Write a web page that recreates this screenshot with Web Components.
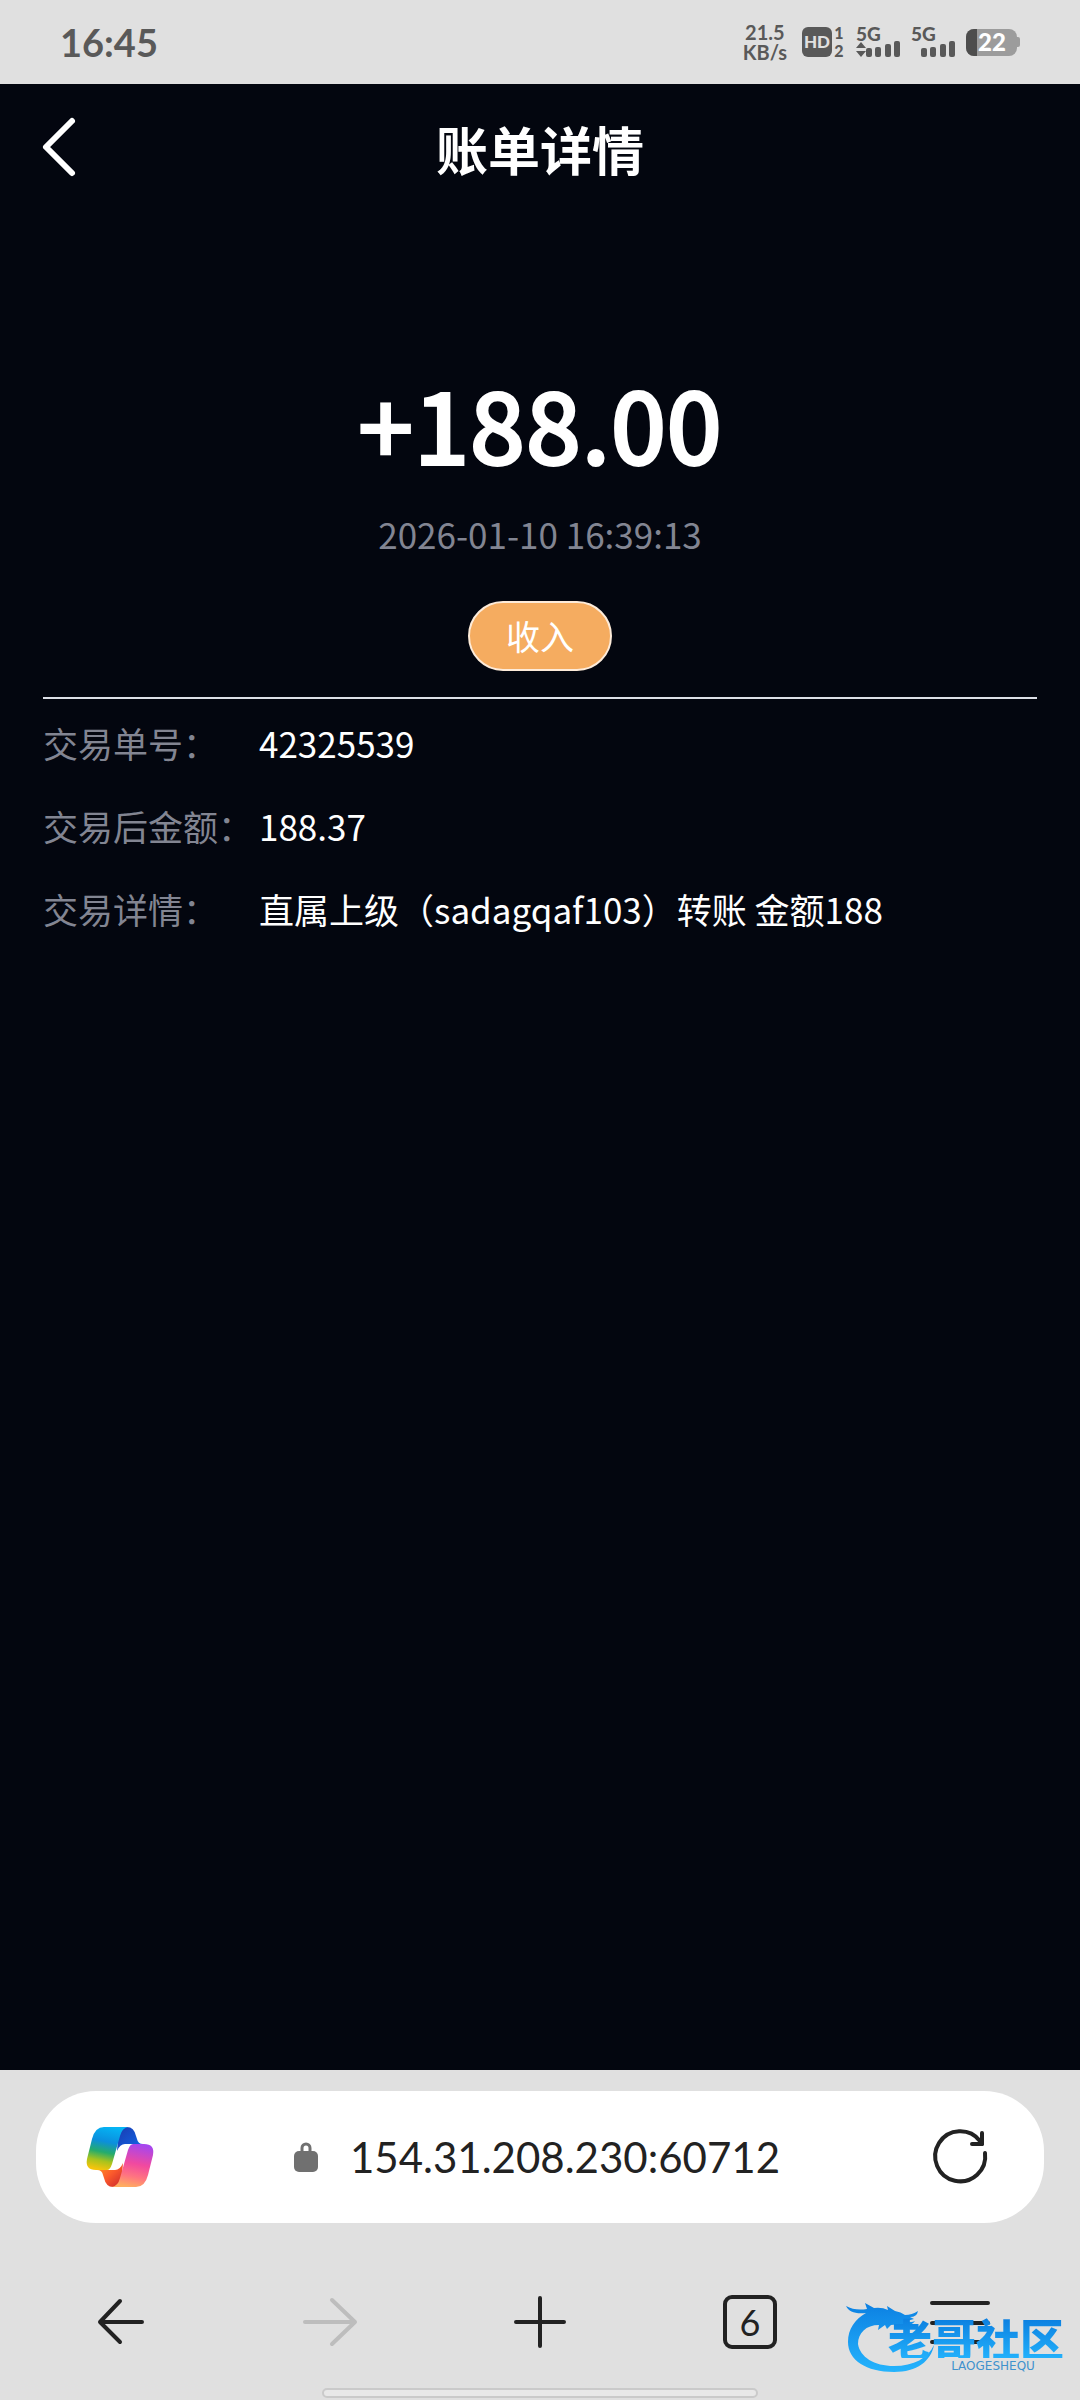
<!DOCTYPE html>
<html lang="zh-CN">
<head>
<meta charset="utf-8">
<meta name="viewport" content="width=device-width">
<title>账单详情</title>
<style>
html, body { margin: 0; background: #03060f; }
body { font-family: "Noto Sans CJK SC", "Noto Sans", sans-serif; font-size: 35px; color: #fff; }
</style>
</head>
<body>
<bill-screen>
  <status-bar slot="top"></status-bar>
  <page-header slot="top">账单详情</page-header>
  <bill-summary amount="+188.00" time="2026-01-10 16:39:13" kind="收入"></bill-summary>
  <bill-details>
    <bill-row label="交易单号：">42325539</bill-row>
    <bill-row label="交易后金额：">188.37</bill-row>
    <bill-row label="交易详情：">直属上级（sadagqaf103）转账 金额188</bill-row>
  </bill-details>
  <address-bar slot="bottom" url="154.31.208.230:60712"></address-bar>
  <browser-nav slot="bottom" tabs="6"></browser-nav>
  <site-watermark slot="bottom"></site-watermark>
</bill-screen>

<script>
const define = (name, render) => customElements.define(name, class extends HTMLElement {
  constructor() {
    super();
    this.attachShadow({ mode: 'open' });
  }
  connectedCallback() {
    this.shadowRoot.innerHTML = '<style>*{box-sizing:border-box}button{margin:0;padding:0;border:0;background:none;color:inherit;font:inherit}svg{display:block;overflow:visible}</style>' + render(this);
  }
});

define('bill-screen', () => `
<style>
:host { display: flex; flex-direction: column; min-height: 100vh; background: #03060f; }
main { flex: 1; padding: 0 43px; }
footer { position: relative; background: #e0e0e0; color: #222; padding: 21px 0 2px; }
</style>
<slot name="top"></slot>
<main><slot></slot></main>
<footer><slot name="bottom"></slot></footer>`);

define('status-bar', () => `
<style>
:host { display: flex; justify-content: space-between; align-items: center; height: 84px; padding: 0 60px; background: #e0e0e0; color: #595959; font-family: Lato, sans-serif; font-weight: 700; }
time { font-size: 38px; line-height: 44px; }
.icons { display: flex; align-items: center; gap: 11px; }
.speed { font-size: 20px; line-height: 20px; text-align: center; padding-right: 3px; }
.speed span { display: block; }
text { font-family: Lato, sans-serif; font-weight: 900; }
</style>
<time>16:45</time>
<div class="icons">
  <div class="speed"><span>21.5</span><span>KB/s</span></div>
  <svg width="44" height="32" viewBox="0 0 44 32" fill="#595959">
    <rect x="1" y="1" width="30" height="30" rx="6"/>
    <text x="16" y="22" font-size="17" text-anchor="middle" fill="#e0e0e0">HD</text>
    <text x="38" y="13" font-size="16" text-anchor="middle">1</text>
    <text x="38" y="31" font-size="16" text-anchor="middle">2</text>
  </svg>
  <svg width="44" height="32" viewBox="0 0 44 32" fill="#595959">
    <text x="0" y="15" font-size="19">5G</text>
    <path d="M5 16l5 6H0zM5 31l5-6H0z"/>
    <rect x="10" y="22" width="6" height="9" rx="2"/><rect x="19" y="21" width="6" height="10" rx="2"/><rect x="29" y="18" width="6" height="13" rx="2"/><rect x="38" y="15" width="6" height="16" rx="2"/>
  </svg>
  <svg width="44" height="32" viewBox="0 0 44 32" fill="#595959">
    <text x="0" y="15" font-size="19">5G</text>
    <rect x="10" y="22" width="6" height="9" rx="2"/><rect x="19" y="21" width="6" height="10" rx="2"/><rect x="29" y="18" width="6" height="13" rx="2"/><rect x="38" y="15" width="6" height="16" rx="2"/>
  </svg>
  <svg width="54" height="27" viewBox="0 0 54 27">
    <rect x="0" y="0" width="51" height="27" rx="8" fill="#9c9c9c"/>
    <path d="M51 8h1q2 0 2 2v6q0 2-2 2h-1z" fill="#9c9c9c"/>
    <path d="M11 0v27H8a8 8 0 0 1-8-8V8a8 8 0 0 1 8-8z" fill="#4d4d4d"/>
    <text x="26" y="22" font-size="24" text-anchor="middle" fill="#fff">22</text>
  </svg>
</div>`);

define('page-header', () => `
<style>
:host { display: grid; grid-template-columns: 1fr auto 1fr; align-items: center; height: 130px; padding: 0 43px; }
h1 { margin: 0; font-size: 52px; line-height: 76px; font-weight: 700; }
</style>
<button aria-label="返回"><svg width="32" height="62" viewBox="0 0 32 62" fill="none" stroke="#fff" stroke-width="6" stroke-linecap="round" stroke-linejoin="round"><path d="M29 3L3 29l26 26"/></svg></button>
<h1><slot></slot></h1>`);

define('bill-summary', el => `
<style>
:host { display: flex; flex-direction: column; align-items: center; padding: 128px 0 26px; border-bottom: 2px solid #dcdfe6; }
strong { font-size: 98px; line-height: 160px; font-weight: 500; -webkit-text-stroke: 2px currentColor; }
time { color: #828592; line-height: 52px; margin: 6px 0 41px; }
button { width: 144px; height: 70px; border: 2px solid #fdebd9; border-radius: 35px; background: #f5ac60; color: #fff; font-size: 34px; line-height: 66px; }
</style>
<strong>${el.getAttribute('amount')}</strong>
<time>${el.getAttribute('time')}</time>
<button>${el.getAttribute('kind')}</button>`);

define('bill-details', () => `
<style>:host { display: flex; flex-direction: column; gap: 31px; padding-top: 18px; }</style>
<slot></slot>`);

define('bill-row', el => `
<style>
:host { display: flex; line-height: 52px; }
.label { flex: 0 0 216px; color: #828592; white-space: nowrap; }
.value { flex: 1; }
</style>
<span class="label">${el.getAttribute('label')}</span>
<span class="value"><slot></slot></span>`);

define('address-bar', el => `
<style>
:host { display: flex; align-items: center; justify-content: space-between; height: 132px; margin: 0 36px; padding: 0 51px; border-radius: 60px; background: #fff; }
label { display: flex; align-items: center; gap: 32px; padding-right: 6px; }
input { field-sizing: content; border: 0; padding: 0; background: none; color: #222; font: 42px/56px Lato, sans-serif; outline: 0; }
</style>
<button aria-label="Copilot"><svg width="66" height="60" viewBox="0 0 66 60">
  <defs>
    <linearGradient id="a" x1=".6" y1="0" x2=".4" y2="1"><stop offset="0" stop-color="#05b4f4"/><stop offset=".35" stop-color="#0b8fdd"/><stop offset=".6" stop-color="#25ac6c"/><stop offset=".8" stop-color="#a8c31d"/><stop offset="1" stop-color="#f4c40c"/></linearGradient>
    <linearGradient id="b" x1=".6" y1="0" x2=".4" y2="1"><stop offset="0" stop-color="#a646ee"/><stop offset=".45" stop-color="#f1499f"/><stop offset=".75" stop-color="#ff7580"/><stop offset="1" stop-color="#ffad60"/></linearGradient>
    <linearGradient id="c" x1="0" y1="0" x2="1" y2="1"><stop offset="0" stop-color="#1a3bb0"/><stop offset="1" stop-color="#1169ea"/></linearGradient>
    <linearGradient id="d" x1="0" y1="0" x2="1" y2="1"><stop offset="0" stop-color="#ff9a20"/><stop offset=".5" stop-color="#fb5a2c"/><stop offset="1" stop-color="#c8232c"/></linearGradient>
  </defs>
  <path d="M32 0h8q7 0 9 9l1 3q1 5 6 5H38q-5 0-8 7z" fill="url(#c)"/>
  <path d="M34 60h-8q-7 0-9-9l-1-3q-1-5-6-5h18q5 0 8-7z" fill="url(#d)"/>
  <path d="M17 0h24q-6 1-8 9l-8 28q-2 6-5 6H9q-11 0-9-11L5 12Q8 0 17 0z" fill="url(#a)"/>
  <path d="M49 60H25q6-1 8-9l8-28q2-6 5-6h11q11 0 9 11l-5 20q-3 12-12 12z" fill="url(#b)"/>
</svg></button>
<label><svg width="24" height="30" viewBox="0 0 24 30"><rect y="9" width="24" height="21" rx="5" fill="#707070"/><path d="M8 11V6a4 4 0 0 1 8 0v5" fill="none" stroke="#707070" stroke-width="3"/></svg>
<input aria-label="网址" value="${el.getAttribute('url')}" readonly></label>
<button aria-label="刷新"><svg width="66" height="60" viewBox="0 0 66 60" fill="none" stroke="#222" stroke-width="4" stroke-linecap="round" stroke-linejoin="round"><path d="M58 26a25 25 0 1 1-5-12l2 3"/><path d="M55 6v11H45"/></svg></button>`);

define('browser-nav', el => `
<style>
:host { display: flex; flex-direction: column; align-items: center; gap: 28px; }
nav { display: grid; grid-template-columns: repeat(5, 1fr); width: 100%; padding: 60px 15px 0; }
button { display: flex; justify-content: center; align-items: center; height: 77px; }
.tabs span { width: 54px; height: 54px; border: 4px solid #222; border-radius: 9px; font: 36px/46px Lato, sans-serif; }
i { width: 436px; height: 10px; border: 2px solid #cacaca; border-radius: 5px; background: #e8e8e8; }
</style>
<nav>
  <button aria-label="后退"><svg width="60" height="56" viewBox="0 0 60 56" fill="none" stroke="#222" stroke-width="4" stroke-linecap="round" stroke-linejoin="round"><path d="M30 7L10 28l20 20M10 28h42"/></svg></button>
  <button aria-label="前进" disabled><svg width="60" height="56" viewBox="0 0 60 56" fill="none" stroke="#bdbdbd" stroke-width="4" stroke-linecap="round" stroke-linejoin="round"><path d="M32 6l23 22-23 22M55 28H5"/></svg></button>
  <button aria-label="新建标签页"><svg width="60" height="56" viewBox="0 0 60 56" fill="none" stroke="#222" stroke-width="4" stroke-linecap="round"><path d="M30 4v48M6 28h48"/></svg></button>
  <button class="tabs" aria-label="标签页"><span>${el.getAttribute('tabs')}</span></button>
  <button aria-label="菜单"><svg width="60" height="56" viewBox="0 0 60 56" fill="none" stroke="#222" stroke-width="4" stroke-linecap="round"><path d="M2 9h56M2 29h56M2 48h56"/></svg></button>
</nav>
<i></i>`);

define('site-watermark', () => `
<style>
:host { position: absolute; right: 16px; bottom: 26px; display: flex; pointer-events: none; }
.words { display: flex; flex-direction: column; align-items: center; margin-left: -50px; padding-top: 16px; }
b { font-size: 44px; line-height: 40px; font-weight: 900; background: linear-gradient(#0c7fe0, #22b0fb); background-clip: text; color: transparent; }
small { font: 12px/16px "DejaVu Sans", sans-serif; color: #3f92cd; padding-left: 34px; }
</style>
<svg width="92" height="72" viewBox="0 0 92 72">
  <defs><linearGradient id="g" x1="0" y1="0" x2="0" y2="1"><stop offset="0" stop-color="#0c80e2"/><stop offset="1" stop-color="#25b4fd"/></linearGradient></defs>
  <path fill="url(#g)" d="M0 4q9 5 21 3l-2-6 9 5q8-1 14 2l-1-4 8 5q6 1 10 4 7 0 13-4-1 6-8 6l4 2-7 2q4 2 8 0-4 6-14 3l-10 1-4 4-2-4-7 5 1-5C20 23 12 31 12 42c2 13 16 22 36 22 20 0 34-8 40-21C85 59 71 70 48 70 20 70 2 58 2 40 2 27 9 17 20 11 9 12 3 10 0 4z"/>
</svg>
<div class="words"><b>老哥社区</b><small>LAOGESHEQU</small></div>`);
</script>
</body>
</html>
